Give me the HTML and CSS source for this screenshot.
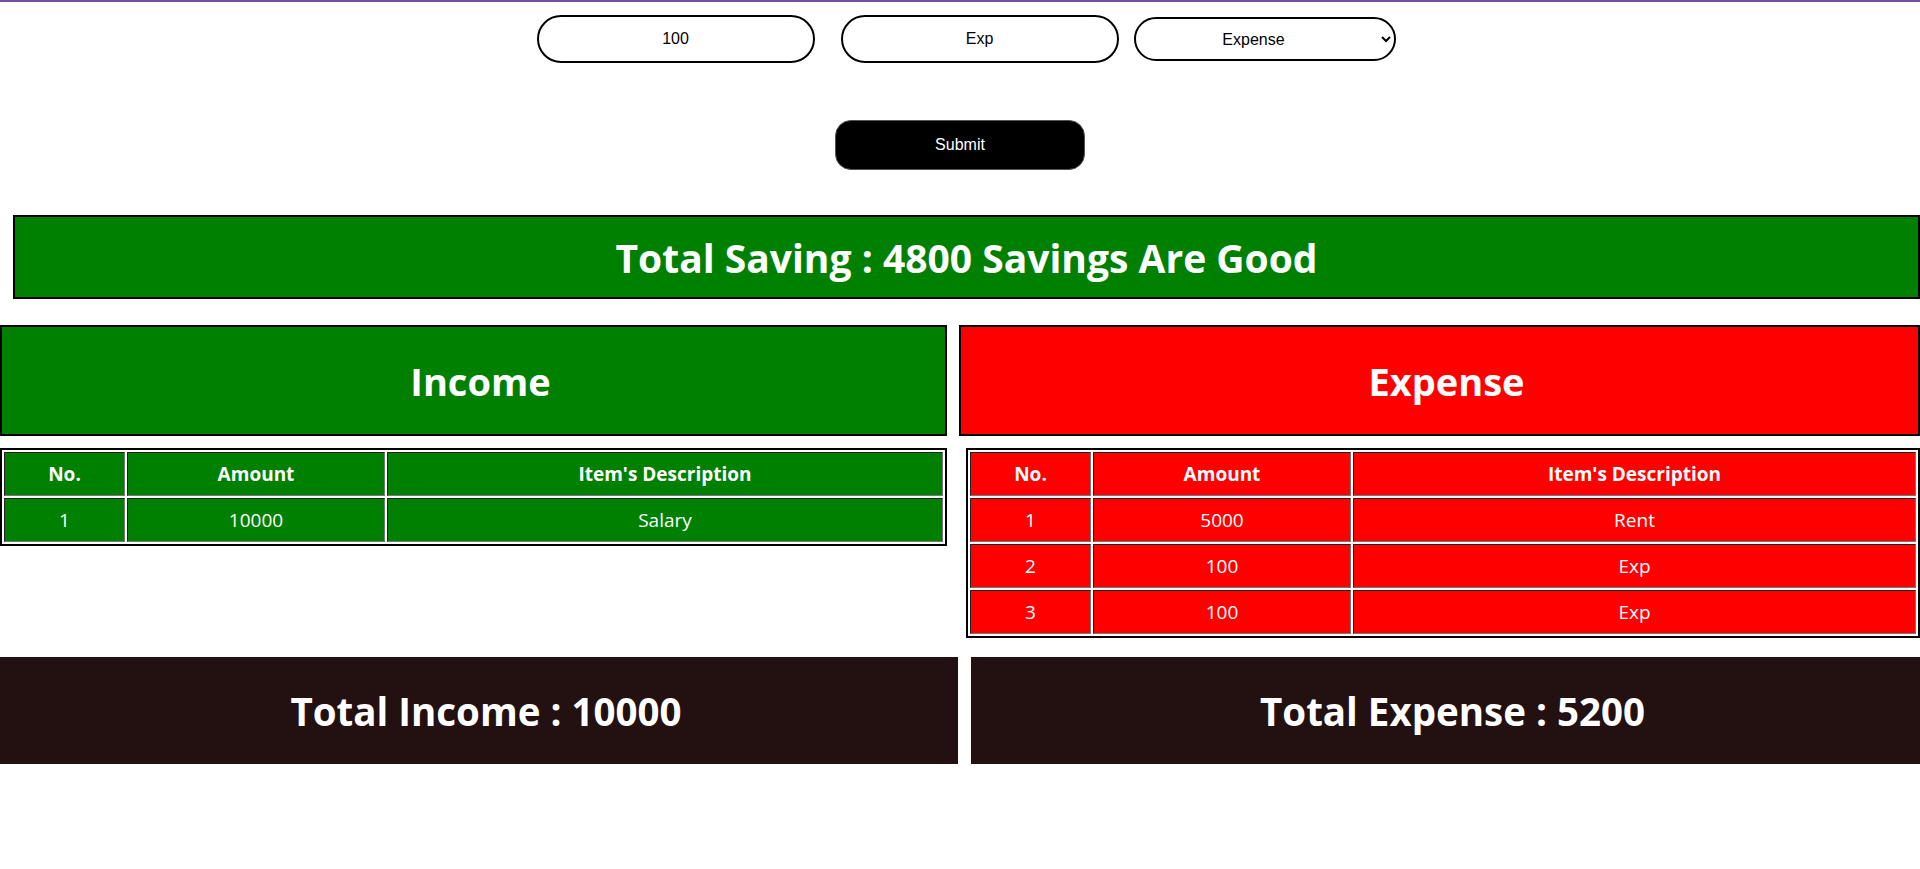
FILE: index.html
```html
<!DOCTYPE html>
<html>
<head>
<meta charset="utf-8">
<link rel="stylesheet" href="styles.css">
</head>
<body>
<div class="topline"></div>
<form class="entry">
  <div class="fields">
    <input class="field field-amount" type="text" value="100">
    <input class="field field-desc" type="text" value="Exp">
    <select class="field field-type">
      <option>Income</option>
      <option selected>Expense</option>
    </select>
  </div>
  <div class="actions">
    <button class="submit" type="button">Submit</button>
  </div>
</form>

<div class="saving">Total Saving : 4800 Savings Are Good</div>

<div class="columns">
  <section class="col col-income">
    <div class="head head-income">Income</div>
    <table class="list list-income">
      <colgroup><col class="c-no"><col class="c-amt"><col class="c-desc"></colgroup>
      <thead><tr><th>No.</th><th>Amount</th><th>Item's Description</th></tr></thead>
      <tbody>
        <tr><td>1</td><td>10000</td><td>Salary</td></tr>
      </tbody>
    </table>
  </section>
  <section class="col col-expense">
    <div class="head head-expense">Expense</div>
    <table class="list list-expense">
      <colgroup><col class="c-no"><col class="c-amt"><col class="c-desc"></colgroup>
      <thead><tr><th>No.</th><th>Amount</th><th>Item's Description</th></tr></thead>
      <tbody>
        <tr><td>1</td><td>5000</td><td>Rent</td></tr>
        <tr><td>2</td><td>100</td><td>Exp</td></tr>
        <tr><td>3</td><td>100</td><td>Exp</td></tr>
      </tbody>
    </table>
  </section>
</div>

<div class="totals">
  <div class="total total-income">Total Income : 10000</div>
  <div class="total total-expense">Total Expense : 5200</div>
</div>
</body>
</html>
```
FILE: styles.css
```css
html, body {
  margin: 0;
  padding: 0;
  background: #ffffff;
}
body {
  font-family: "Open Sans", "Noto Sans", sans-serif;
  color: #000;
  width: 1920px;
  overflow-x: hidden;
}
.topline {
  height: 2px;
  background: #744ea8;
}
.entry {
  margin: 0;
}
.fields {
  display: flex;
  justify-content: center;
  align-items: center;
  padding-left: 12px;
  margin-top: 13px;
  height: 48px;
}
.field {
  box-sizing: border-box;
  font-family: "Liberation Sans", Arial, sans-serif;
  font-size: 16px;
  color: #000;
  background: #fff;
  border: 2px solid #000;
  text-align: center;
  outline: none;
}
.field-amount,
.field-desc {
  width: 278px;
  height: 48px;
  border-radius: 24px;
}
.field-amount {
  margin-right: 26px;
}
.field-desc {
  margin-right: 15px;
}
.field-type {
  width: 262px;
  height: 44px;
  border-radius: 22px;
  padding: 0 10px 0 0;
  text-align-last: center;
}
.actions {
  display: flex;
  justify-content: center;
  margin-top: 57px;
}
.submit {
  width: 250px;
  height: 50px;
  border-radius: 16px;
  border: 1px solid #555;
  background: #000;
  color: #fff;
  font-family: "Liberation Sans", Arial, sans-serif;
  font-size: 16px;
  padding: 0;
}
.saving {
  box-sizing: border-box;
  margin: 45px 0 0 13px;
  height: 84px;
  border: 2px solid #000;
  background: #008000;
  color: #fff;
  font-weight: 700;
  font-size: 39px;
  display: flex;
  align-items: center;
  justify-content: center;
}
.columns {
  display: flex;
  margin-top: 26px;
}
.col-income {
  width: 947px;
}
.col-expense {
  flex: 1;
  margin-left: 12px;
}
.head {
  box-sizing: border-box;
  height: 111px;
  border: 2px solid #000;
  padding-left: 14px;
  color: #fff;
  font-weight: 700;
  font-size: 38px;
  display: flex;
  align-items: center;
  justify-content: center;
}
.head-income {
  background: #008000;
}
.head-expense {
  background: #ff0000;
}
.list {
  margin-top: 12px;
  width: 100%;
  border: 2px solid #000;
  border-spacing: 2px;
  box-sizing: border-box;
  table-layout: fixed;
}
.list-expense {
  margin-left: 7px;
  width: calc(100% - 7px);
}
.c-no { width: 121px; }
.c-amt { width: 258px; }
.list th,
.list td {
  border: 1px solid #222;
  border-right-color: #777;
  border-bottom-color: #777;
  color: #fff;
  font-size: 19px;
  height: 42px;
  padding: 0;
  text-align: center;
}
.list th {
  font-weight: 700;
}
.list td {
  font-weight: 400;
}
.list-income th,
.list-income td {
  background: #008000;
}
.list-expense th,
.list-expense td {
  background: #ff0000;
}
.totals {
  display: flex;
  margin-top: 19px;
}
.total {
  box-sizing: border-box;
  height: 107px;
  padding-left: 14px;
  background: #231010;
  color: #fff;
  font-weight: 700;
  font-size: 38.5px;
  display: flex;
  align-items: center;
  justify-content: center;
}
.total-income {
  width: 958px;
}
.total-expense {
  flex: 1;
  margin-left: 13px;
}
```
